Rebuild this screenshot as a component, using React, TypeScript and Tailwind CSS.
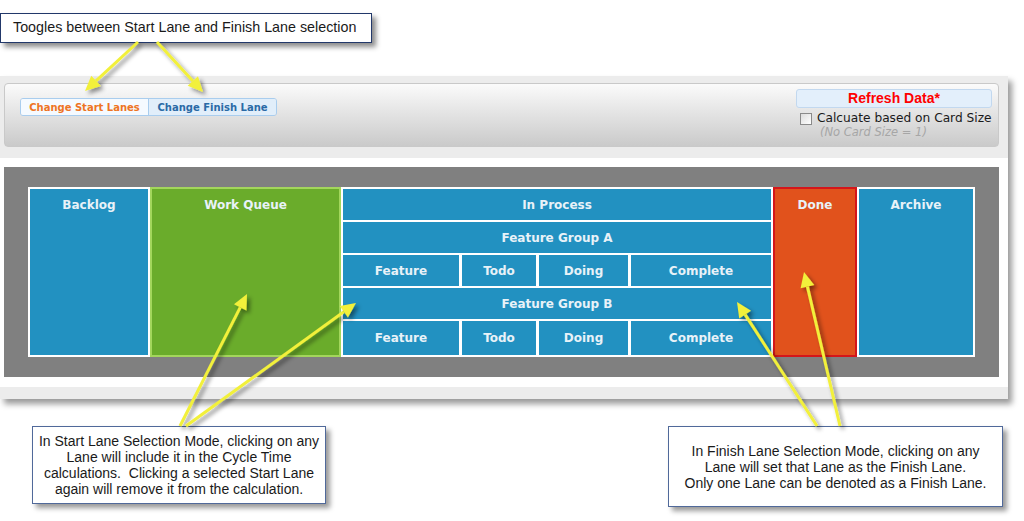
const arrows = [
  { x1: 138, y1: 42, x2: 85, y2: 91 },
  { x1: 157, y1: 42, x2: 203, y2: 92 },
  { x1: 180, y1: 426, x2: 247, y2: 294 },
  { x1: 186, y1: 426, x2: 356, y2: 303 },
  { x1: 817, y1: 426, x2: 737, y2: 302 },
  { x1: 840, y1: 426, x2: 804, y2: 272 },
];

function Arrow({ x1, y1, x2, y2 }: { x1: number; y1: number; x2: number; y2: number }) {
  const dx = x2 - x1;
  const dy = y2 - y1;
  const len = Math.sqrt(dx * dx + dy * dy);
  const ux = dx / len;
  const uy = dy / len;
  const bx = x2 - ux * 15;
  const by = y2 - uy * 15;
  const nx = -uy * 7;
  const ny = ux * 7;
  return (
    <g>
      <line x1={x1} y1={y1} x2={bx} y2={by} stroke="#f2f03a" strokeWidth={3} />
      <polygon
        points={`${x2},${y2} ${bx + nx},${by + ny} ${bx - nx},${by - ny}`}
        fill="#f2f03a"
      />
    </g>
  );
}

function Lane({ title, width, className }: { title: string; width: string; className: string }) {
  return (
    <div className={`${width} h-[170px] border-2 ${className}`}>
      <div className="h-[31px] flex items-center justify-center">{title}</div>
    </div>
  );
}

function Cell({ title, className = "" }: { title: string; className?: string }) {
  return (
    <div className={`bg-[#2291c1] flex items-center justify-center ${className}`}>{title}</div>
  );
}

function SubRow({ last = false }: { last?: boolean }) {
  return (
    <div className={`flex gap-[3px] ${last ? "flex-1" : "h-[31px]"}`}>
      <Cell title="Feature" className="w-[116px]" />
      <Cell title="Todo" className="w-[74px]" />
      <Cell title="Doing" className="w-[89px]" />
      <Cell title="Complete" className="flex-1" />
    </div>
  );
}

export default function App() {
  return (
    <div className="relative w-[1024px] h-[521px] overflow-hidden bg-white font-['Liberation_Sans',Arial,sans-serif]">
      <div className="pt-[13px]">
        <div className="w-[372px] h-[30px] border-[1.5px] border-[#22386a] bg-white shadow-[4px_4px_5px_rgba(0,0,0,0.45)] pl-[12px] flex items-center text-[14.3px] text-[#1a1a1a]">
          Toogles between Start Lane and Finish Lane selection
        </div>
      </div>

      <div className="mt-[33px] w-[1008px] h-[323px] bg-[#ececec] shadow-[4px_5px_6px_rgba(0,0,0,0.4)] flex flex-col">
        <div className="h-[82px] pt-[7px] pl-[4px]">
          <div className="w-[995px] h-[64px] rounded-[4px] border border-[#c9c9c9] bg-gradient-to-b from-[#fbfbfb] to-[#cacaca] flex justify-between">
            <div className="mt-[14px] ml-[15px] h-[18px] flex rounded-[3px] border border-[#a9cdee] overflow-hidden font-['DejaVu_Sans',Verdana,sans-serif] font-bold text-[10px]">
              <div className="w-[128px] bg-[#f5faff] text-[#ee7424] flex items-center justify-center border-r border-[#a9cdee]">
                Change Start Lanes
              </div>
              <div className="w-[127px] bg-[#e1eefa] text-[#2a6aa6] flex items-center justify-center">
                Change Finish Lane
              </div>
            </div>
            <div className="w-[196px] mr-[6px] mt-[5px] flex flex-col">
              <div className="h-[19px] rounded-[3px] border border-[#c2d8ef] bg-[#e3effb] flex items-center justify-center text-[14px] font-bold text-[#ff0000]">
                Refresh Data*
              </div>
              <div className="mt-[3px] h-[15px] flex items-center font-['DejaVu_Sans',Verdana,sans-serif] text-[12.2px] text-[#1a1a1a]">
                <span className="ml-[4px] mr-[5px] w-[12px] h-[12px] border border-[#8a8a8a] bg-gradient-to-br from-[#dcdcdc] to-[#ffffff]" />
                Calcuate based on Card Size
              </div>
              <div className="ml-[24px] h-[14px] flex items-center font-['DejaVu_Sans',Verdana,sans-serif] italic text-[11.5px] text-[#a6a6a6]">
                (No Card Size = 1)
              </div>
            </div>
          </div>
        </div>

        <div className="h-[229px] bg-white pt-[9px] pl-[4px]">
          <div className="w-[995px] h-[210px] bg-[#808080] pt-[20px] pl-[24px] flex font-['DejaVu_Sans',Verdana,sans-serif] font-bold text-[12px] text-[#e8f2f8]">
            <Lane title="Backlog" width="w-[122px]" className="border-white bg-[#2291c1]" />
            <Lane title="Work Queue" width="w-[191px]" className="border-[#a3d65c] bg-[#6aac2b]" />
            <div className="w-[432px] h-[170px] border-2 border-white bg-white flex flex-col gap-[2px]">
              <Cell title="In Process" className="h-[31px]" />
              <Cell title="Feature Group A" className="h-[31px]" />
              <SubRow />
              <Cell title="Feature Group B" className="h-[31px]" />
              <SubRow last />
            </div>
            <Lane title="Done" width="w-[84px]" className="border-[#d4161a] bg-[#e1521c]" />
            <Lane title="Archive" width="w-[118px]" className="border-white bg-[#2291c1]" />
          </div>
        </div>
      </div>

      <div className="mt-[27px] flex items-start text-[14px] leading-[16px] text-[#1a1a1a]">
        <div className="ml-[32px] w-[294px] h-[78px] border border-[#50699a] bg-white shadow-[4px_4px_5px_rgba(0,0,0,0.4)] pt-[6px] text-center">
          In Start Lane Selection Mode, clicking on any
          <br />
          Lane will include it in the Cycle Time
          <br />
          calculations.&nbsp; Clicking a selected Start Lane
          <br />
          again will remove it from the calculation.
        </div>
        <div className="ml-[342px] w-[335px] h-[81px] border border-[#50699a] bg-white shadow-[4px_4px_5px_rgba(0,0,0,0.4)] flex flex-col items-center justify-center text-center">
          <div>In Finish Lane Selection Mode, clicking on any</div>
          <div>Lane will set that Lane as the Finish Lane.</div>
          <div>Only one Lane can be denoted as a Finish Lane.</div>
        </div>
      </div>

      <svg className="absolute inset-0 pointer-events-none" width={1024} height={521}>
        <defs>
          <filter id="arrowShadow" x="-20%" y="-20%" width="140%" height="140%">
            <feDropShadow dx="3" dy="3" stdDeviation="2" floodColor="#000" floodOpacity="0.45" />
          </filter>
        </defs>
        <g filter="url(#arrowShadow)">
          {arrows.map((a, i) => (
            <Arrow key={i} {...a} />
          ))}
        </g>
      </svg>
    </div>
  );
}
